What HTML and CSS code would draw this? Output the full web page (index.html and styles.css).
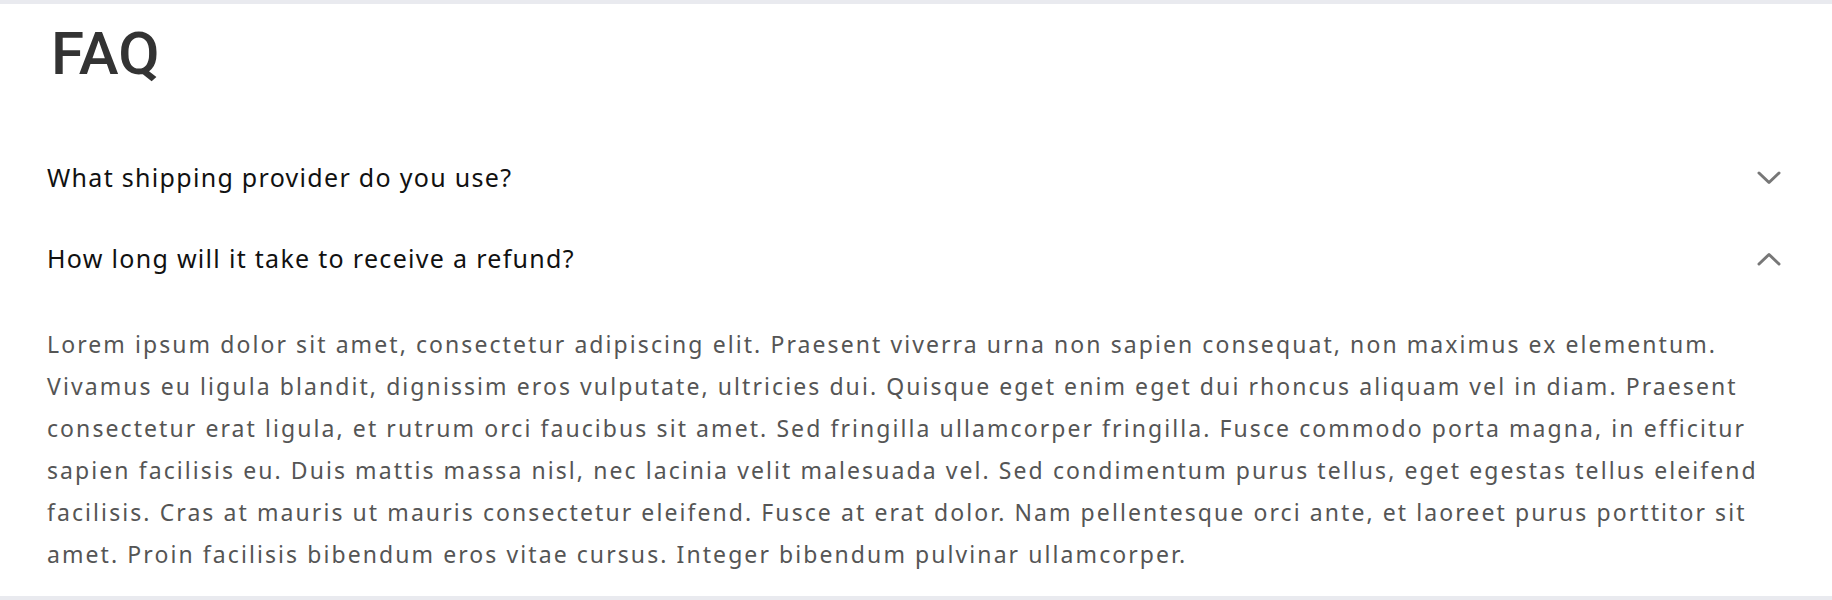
FILE: index.html
```html
<!DOCTYPE html>
<html lang="en">
<head>
    <meta charset="UTF-8">
    <meta name="viewport" content="width=device-width, initial-scale=1.0">
    <title>FAQ</title>
    <link rel="stylesheet" href="styles.css">
</head>
<body>
<main class="main">
    <section class="faq">
        <h1 class="title">FAQ</h1>
        <div class="item">
            <button class="question">
                <span>What shipping provider do you use?</span>
                <svg class="chevron" width="24" height="14" viewBox="0 0 24 14"><polyline points="2,2 12,11.5 22,2"/></svg>
            </button>
        </div>
        <div class="item open">
            <button class="question">
                <span>How long will it take to receive a refund?</span>
                <svg class="chevron" width="24" height="14" viewBox="0 0 24 14"><polyline points="2,12 12,2.5 22,12"/></svg>
            </button>
            <p class="answer">Lorem ipsum dolor sit amet, consectetur adipiscing elit. Praesent viverra urna non sapien consequat, non maximus ex elementum. Vivamus eu ligula blandit, dignissim eros vulputate, ultricies dui. Quisque eget enim eget dui rhoncus aliquam vel in diam. Praesent consectetur erat ligula, et rutrum orci faucibus sit amet. Sed fringilla ullamcorper fringilla. Fusce commodo porta magna, in efficitur sapien facilisis eu. Duis mattis massa nisl, nec lacinia velit malesuada vel. Sed condimentum purus tellus, eget egestas tellus eleifend facilisis. Cras at mauris ut mauris consectetur eleifend. Fusce at erat dolor. Nam pellentesque orci ante, et laoreet purus porttitor sit amet. Proin facilisis bibendum eros vitae cursus. Integer bibendum pulvinar ullamcorper.</p>
        </div>
    </section>
</main>
</body>
</html>
```

FILE: styles.css
```css
*, *::before, *::after{
    box-sizing: border-box;
    padding: 0;
    margin: 0;
}

body{
    background-color: #FFF;
    font-family: 'Noto Sans', sans-serif;
}

.main{
    border-top: 4px solid #E9EAEF;
    border-bottom: 4px solid #E9EAEF;
    min-height: 600px;
}

.faq{
    padding: 14px 47px 20px;
}

.title{
    font-family: Roboto, sans-serif;
    font-size: 60px;
    font-weight: 500;
    line-height: 72px;
    color: #333;
    padding-left: 4px;
    margin-bottom: 47px;
}

.question{
    width: 100%;
    display: flex;
    align-items: center;
    justify-content: space-between;
    padding: 24px 4px 24px 0;
    background: none;
    border: none;
    cursor: pointer;
    font-family: 'Noto Sans', sans-serif;
    font-size: 25px;
    letter-spacing: 1.3px;
    line-height: 33px;
    color: #111;
    text-align: left;
}

.chevron{
    fill: none;
    stroke: #777;
    stroke-width: 3;
    stroke-linecap: round;
    stroke-linejoin: round;
}

.answer{
    padding-top: 24px;
    font-family: 'Noto Sans', sans-serif;
    font-size: 23px;
    letter-spacing: 2.08px;
    line-height: 42px;
    color: #555;
}
```
